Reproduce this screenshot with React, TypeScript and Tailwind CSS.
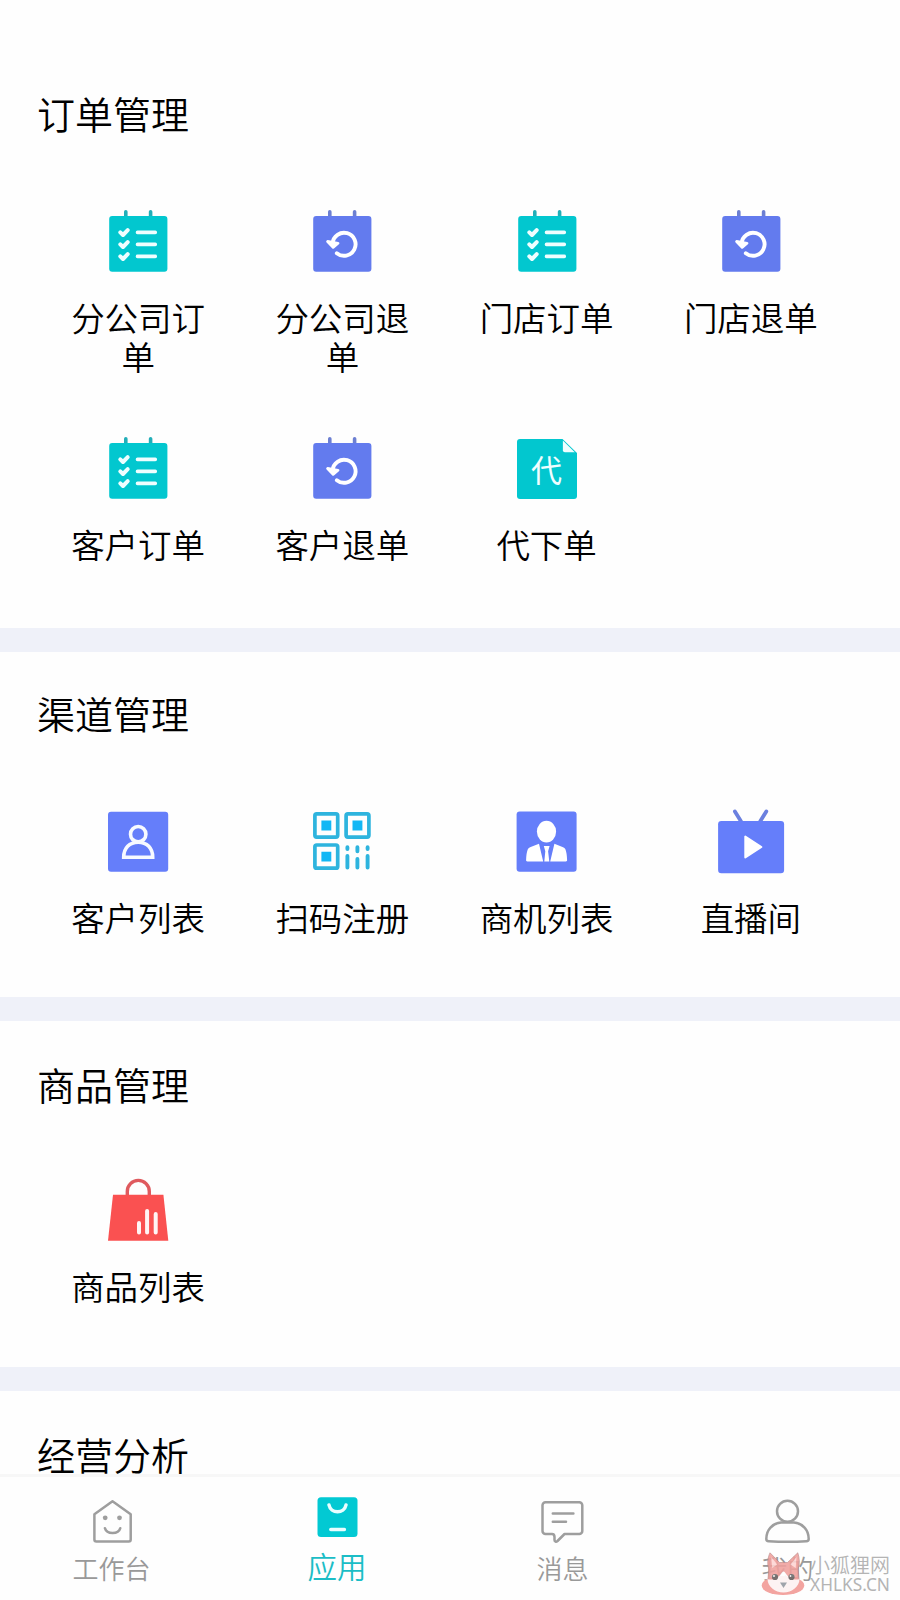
import type { ReactNode } from "react";

const TEAL = "#02c7cf";
const BLUE = "#657efa";

function Icon({ children }: { children: ReactNode }) {
  return (
    <svg viewBox="0 0 68 68" fill="none" strokeLinecap="round" strokeLinejoin="round" className="size-[68px] shrink-0">
      {children}
    </svg>
  );
}

function Calendar({ color, post, children }: { color: string; post: string; children: ReactNode }) {
  return (
    <Icon>
      <path d="M21.800 3.800V10M46.600 3.800V10" stroke={post} strokeWidth="3.600" />
      <rect x="5.200" y="8" width="58.200" height="55.800" rx="3" fill={color} />
      {children}
    </Icon>
  );
}

const OrderIcon = () => (
  <Calendar color={TEAL} post="#22aeb8">
    <g stroke="#effeff">
      <path d="M33.500 24.400H51.300M33.500 36.400H51.300M33.500 48.400H51.300" strokeWidth="3.600" />
      <path d="M16.300 24.300l2.700 2.700 4.700-4.900M16.300 36.300l2.700 2.700 4.700-4.900M16.300 48.300l2.700 2.700 4.700-4.900" strokeWidth="4" />
    </g>
  </Calendar>
);

const RefundIcon = () => (
  <Calendar color="#637bee" post="#6c7fd2">
    <path d="M24.600 35.400A11.500 11.500 0 1 1 28.800 45.200" stroke="#fff" strokeWidth="3.900" />
    <path d="M19.600 33.500L30 35.300L25.100 39.400Z" fill="#fff" stroke="#fff" strokeWidth="2.800" />
  </Calendar>
);

const ProxyIcon = () => (
  <Icon>
    <path d="M7 4H49.500L64 18V61a3 3 0 0 1-3 3H7a3 3 0 0 1-3-3V7a3 3 0 0 1 3-3Z" fill={TEAL} />
    <path d="M49.900 5.500V15.300a2 2 0 0 0 2 2H61.800Z" fill="#effeff" />
    <text x="33.500" y="46.500" textAnchor="middle" fontSize="31" fill="#effeff" className="font-normal">代</text>
  </Icon>
);

const CustomerIcon = () => (
  <Icon>
    <rect x="4" y="3.800" width="60.200" height="60" rx="3" fill={BLUE} />
    <g stroke="#f7faff" strokeWidth="3.600">
      <circle cx="34.200" cy="26.200" r="7.700" />
      <path d="M19.700 49.300H48.700C48.700 40 43 34.200 34.200 34.200S19.700 40 19.700 49.300Z" strokeLinejoin="miter" />
    </g>
  </Icon>
);

const QrIcon = () => (
  <Icon>
    <g stroke="#2eb4de" strokeWidth="3.700">
      <rect x="6.900" y="5.900" width="22.800" height="23.200" rx="1.800" />
      <rect x="38.100" y="5.900" width="22.800" height="23.200" rx="1.800" />
      <rect x="6.900" y="37" width="22.800" height="23.200" rx="1.800" />
      <path d="M39.400 39.200v1.800M49.400 39.200v4M59.600 39.200v1.800M39.400 48v11.500M49.400 51v8.500M59.600 48v11.500" strokeWidth="3.900" />
    </g>
    <path d="M13.400 12.600h9.900v9.900h-9.900zM44.500 12.600h9.900v9.900h-9.900zM13.400 43.700h9.900v9.900h-9.900z" fill="#12b7f5" />
  </Icon>
);

const LeadIcon = () => (
  <Icon>
    <rect x="3.600" y="3.400" width="60" height="60.400" rx="3" fill={BLUE} />
    <g fill="#fff">
      <ellipse cx="33.500" cy="23.600" rx="9.600" ry="10.900" />
      <path d="M26 35.800L30.200 53.400H14.400c-1 0-1.400-.5-1.300-1.400.2-4.400.6-7.600 1.600-10.400.5-1.400 1.500-2 3-2.600Z" />
      <path d="M41.400 35.800L37.200 53.400H52.800c1 0 1.400-.5 1.300-1.400-.2-4.400-.6-7.600-1.600-10.400-.5-1.400-1.500-2-3-2.600Z" />
      <path d="M30.800 38h5.800l-1.500 5.200 1.200 10.200h-5l1-10.200Z" />
    </g>
  </Icon>
);

const LiveIcon = () => (
  <Icon>
    <path d="M17.900 3.400L23.800 13M49.300 3.400L43.400 13" stroke="#6b80df" strokeWidth="3.800" />
    <rect x="1.100" y="13" width="66" height="52.200" rx="3.200" fill={BLUE} />
    <path d="M28.300 28.600V49.400L44.400 39Z" fill="#fff" stroke="#fff" strokeWidth="2" />
  </Icon>
);

const BagIcon = () => (
  <Icon>
    <path d="M23.300 18.500V14.400a11 11 0 0 1 22 0V18.500" stroke="#df5a5e" strokeWidth="3.400" />
    <path d="M9 17.800H59.400L64.300 63.800H4Z" fill="#fa5151" />
    <path d="M35 46v9.500M43.100 34v21.500M51.700 37v18.500" stroke="#fff5f5" strokeWidth="4" />
  </Icon>
);

type Item = { label: string; icon: ReactNode };

const orders: Item[] = [
  { label: "分公司订单", icon: <OrderIcon /> },
  { label: "分公司退单", icon: <RefundIcon /> },
  { label: "门店订单", icon: <OrderIcon /> },
  { label: "门店退单", icon: <RefundIcon /> },
  { label: "客户订单", icon: <OrderIcon /> },
  { label: "客户退单", icon: <RefundIcon /> },
  { label: "代下单", icon: <ProxyIcon /> },
];

const channels: Item[] = [
  { label: "客户列表", icon: <CustomerIcon /> },
  { label: "扫码注册", icon: <QrIcon /> },
  { label: "商机列表", icon: <LeadIcon /> },
  { label: "直播间", icon: <LiveIcon /> },
];

const goods: Item[] = [{ label: "商品列表", icon: <BagIcon /> }];

function Section({ title, items, className, gridClass = "mt-[71px]" }: { title: string; items: Item[]; className: string; gridClass?: string }) {
  return (
    <section className={`shrink-0 bg-[#fefefe] px-9 ${className}`}>
      <h2 className="pl-px text-[38px] leading-[48px] font-[350]">{title}</h2>
      <div className={`mr-[11px] grid grid-cols-4 gap-y-[59.5px] ${gridClass}`}>
        {items.map((item) => (
          <div key={item.label} className="flex flex-col items-center gap-[20.5px]">
            {item.icon}
            <span className="w-[138px] text-center text-[33.5px] leading-[39.5px] font-[350]">{item.label}</span>
          </div>
        ))}
      </div>
    </section>
  );
}

function TabIcon({ children }: { children: ReactNode }) {
  return (
    <svg viewBox="0 0 48 48" fill="none" stroke="#9e9e9e" strokeWidth="2.500" strokeLinecap="round" strokeLinejoin="round" className="size-12">
      {children}
    </svg>
  );
}

const tabClass = "flex flex-1 flex-col items-center text-[26px] leading-[40px] text-[#999] font-[350]";

function TabBar() {
  return (
    <nav className="flex h-[126px] shrink-0 border-t-3 border-[#f7f7f7] bg-[#fefefe] pt-5">
      <div className={tabClass}>
        <TabIcon>
          <path d="M23.500 4.200L41.700 17.200V42.500a2 2 0 0 1-2 2H7.400a2 2 0 0 1-2-2V17.200Z" />
          <path d="M15.900 31.200c1.800 6.500 13.600 6.500 15.400 0" />
          <circle cx="16.200" cy="20.800" r="2.400" fill="#9e9e9e" stroke="none" />
          <circle cx="30.500" cy="20.800" r="2.400" fill="#9e9e9e" stroke="none" />
        </TabIcon>
        <span className="mr-0.5 mt-[3px]">工作台</span>
      </div>
      <div className="flex flex-1 flex-col items-center text-[29.5px] leading-[40px] font-[350] text-[#1bbdc6]">
        <TabIcon>
          <rect x="3.500" y="0.300" width="40" height="39.800" rx="3.500" fill="#02c9d3" stroke="none" />
          <path d="M15 8c1.800 9 15.200 9 17 0M16.800 32.600H30.400" stroke="#e9feff" strokeWidth="3.500" />
        </TabIcon>
        <span className="mr-px">应用</span>
      </div>
      <div className={tabClass}>
        <TabIcon>
          <path d="M6.500 5.200H40.300a3 3 0 0 1 3 3V34a3 3 0 0 1-3 3H25.500l-7 7c-1.400 1.200-3 .6-3-1V40c0-2-.8-3-2.500-3H6.500a3 3 0 0 1-3-3V8.200a3 3 0 0 1 3-3Z" />
          <path d="M13.800 16.400H34.400M13.800 24.800H27" />
        </TabIcon>
        <span className="mt-[3px]">消息</span>
      </div>
      <div className={tabClass}>
        <TabIcon>
          <circle cx="23.500" cy="14.200" r="10.500" />
          <path d="M17 25.600C8.500 26.500 2.300 32.500 2.300 42c0 1.500.8 2.200 2.400 2.300 11 .6 27 .6 37.600 0 1.600-.1 2.400-.8 2.400-2.300 0-9.500-6.200-15.500-14.700-16.400Z" />
        </TabIcon>
        <span className="mt-[3px]">我的</span>
      </div>
    </nav>
  );
}

function Watermark() {
  return (
    <div className="absolute bottom-1 right-[9px] flex items-center gap-[5px] text-[#b4b4b4]">
      <svg viewBox="0 0 44 44" className="h-11 w-11">
        <ellipse cx="22" cy="33.500" rx="21.300" ry="9.600" fill="#f3a4a0" />
        <g opacity="0.880" strokeLinejoin="round">
          <path d="M9 0.800C6.600 6 6 12 7.800 17L7 27c1 7.500 8 12.500 15.500 12.500S37 34.500 38 27l-.8-10C39 12 38.500 6 36.800 0.800L26.500 10.500h-8Z" fill="#f0a09d" stroke="#b98483" strokeWidth="0.700" />
          <path d="M10.200 5l6 7.500-5 3.500ZM35.500 5l-6 7.500 5.200 3.500Z" fill="#ffd5d3" />
          <path d="M6.500 27c5 2 11-1 14.500-6.500 1-1.500 2-1.500 3 0C27.500 26 33.500 29 38.500 27c0 7.500-7.500 13.500-16 13.500S6.500 34.500 6.500 27Z" fill="#fff" />
          <circle cx="14" cy="25" r="3.100" fill="#686868" />
          <circle cx="30.500" cy="25" r="3.100" fill="#686868" />
          <circle cx="13" cy="24" r="0.900" fill="#fff" />
          <circle cx="29.500" cy="24" r="0.900" fill="#fff" />
          <path d="M19 30.500h7L22.500 36Z" fill="#94a5ad" />
        </g>
      </svg>
      <div className="flex w-[81px] flex-col font-[350]">
        <span className="text-[20px] leading-[21px]">小狐狸网</span>
        <span className="font-['Noto_Sans'] text-[17.3px] leading-[20px] font-normal">XHLKS.CN</span>
      </div>
    </div>
  );
}

export default function App() {
  return (
    <div className="relative flex h-[1600px] w-[900px] flex-col overflow-hidden bg-[#fefefe] font-['Noto_Sans_CJK_SC',sans-serif] text-black">
      <main className="flex min-h-0 flex-1 flex-col gap-6 overflow-hidden bg-[#eff1f9]">
        <Section title="订单管理" items={orders} className="h-[628px] pt-[89px]" />
        <Section title="渠道管理" items={channels} className="h-[345px] pt-[37px]" />
        <Section title="商品管理" items={goods} className="h-[346px] pt-[39px]" gridClass="mt-[69px]" />
        <Section title="经营分析" items={[]} className="h-[345px] pt-[39px]" />
      </main>
      <TabBar />
      <Watermark />
    </div>
  );
}
